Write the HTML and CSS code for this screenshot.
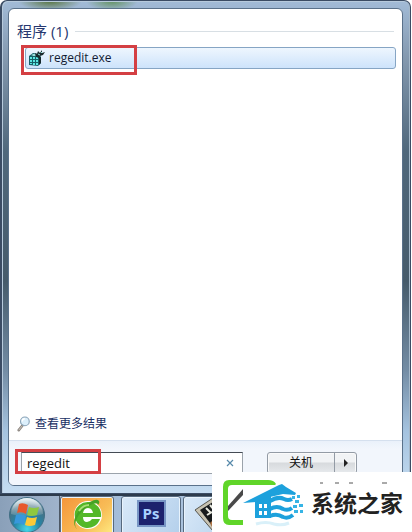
FILE: index.html
```html
<!DOCTYPE html>
<html lang="zh-CN">
<head>
<meta charset="utf-8">
<title>程序</title>
<link rel="stylesheet" href="styles.css">
</head>
<body>
<main class="menu">
  <div class="panel">
    <section class="results">
      <h1 class="group">程序 (1)</h1>
      <a class="result" href="#regedit">
        <svg class="result-icon" viewBox="0 0 18 18" aria-hidden="true">
          <path d="M1 7l4-3 6 1 2 3v6l-3 3-9-1z" fill="#176068"/>
          <path d="M2 8h2v2H2zM5 8h2v2H5zM8 8h2v2H8zM2 11h2v2H2zM5 11h2v2H5zM8 11h2v2H8zM2 14h2v1H2zM5 14h2v2H5zM8 14h2v2H8z" fill="#5ce6e2"/>
          <path d="M3 6l3-1 3 1-3 1z" fill="#b7f5f0"/>
          <path d="M11 9l2-1v6l-2 2z" fill="#12282c"/>
          <path d="M7 4l2 1 1-3 2 2 2-3v3l3-1-2 3-3 1 1 6-2 2V9L8 8z" fill="#18292c"/>
          <path d="M10 5l2 1M13 4l1-1" stroke="#8ae6df" fill="none"/>
        </svg>
        <span>regedit.exe</span>
      </a>
    </section>
    <a class="more" href="#more">
      <svg class="more-icon" viewBox="0 0 16 18" aria-hidden="true">
        <path d="M6 11l-4 5" stroke="#8c8680" stroke-width="3" stroke-linecap="round"/>
        <path d="M6 11l-4 5" stroke="#d5cec5" stroke-width="1"/>
        <circle cx="9" cy="6" r="5" fill="#dceffb" stroke="#8ba4b8" stroke-width="1.3"/>
        <path d="M6 6a3 3 0 0 1 3-3" stroke="#fff" stroke-width="1.5" fill="none"/>
      </svg>
      <span>查看更多结果</span>
    </a>
    <form class="footer">
      <div class="search">
        <input class="search-input" type="text" value="regedit" aria-label="搜索程序和文件">
        <button class="clear" type="button" aria-label="清除">
          <svg viewBox="0 0 8 8" aria-hidden="true"><path d="M1 1l6 6M7 1L1 7" stroke="#5689aa" stroke-width="1.2"/></svg>
        </button>
      </div>
      <div class="power">
        <button class="shutdown" type="button">关机</button>
        <button class="power-more" type="button" aria-label="更多选项">
          <svg viewBox="0 0 4 8" aria-hidden="true"><path d="M0 0l4 4-4 4z" fill="#222"/></svg>
        </button>
      </div>
    </form>
  </div>
  <div class="mark mark-result"></div>
  <div class="mark mark-search"></div>
</main>
<nav class="taskbar">
  <button class="start" type="button" aria-label="开始">
    <svg viewBox="0 0 38 38" aria-hidden="true">
      <defs>
        <radialGradient id="orb" cx=".5" cy=".9" r=".85"><stop offset="0" stop-color="#46d7e8"/><stop offset=".45" stop-color="#2584a5"/><stop offset=".8" stop-color="#487184"/><stop offset="1" stop-color="#a5c4ce"/></radialGradient>
        <linearGradient id="shine" x2="0" y2="1"><stop stop-color="#fff" stop-opacity=".75"/><stop offset="1" stop-color="#fff" stop-opacity=".1"/></linearGradient>
      </defs>
      <circle cx="19" cy="19" r="17.5" fill="url(#orb)" stroke="#416f85"/>
      <path d="M3 18a16 16 0 0 1 32 0c-9 3-23 3-32 0z" fill="url(#shine)"/>
      <path d="M11 8q4-2 9 1l-2 9q-4-3-9-1z" fill="#e8582c"/>
      <path d="M21 11q5 2 10 0l-2 8q-6 2-10 0z" fill="#8fc83f"/>
      <path d="M8 19q5-2 10 1l-2 9q-5-3-10-1z" fill="#3898dc"/>
      <path d="M19 21q5 2 10 0l-2 8q-6 2-10 0z" fill="#fcc938"/>
    </svg>
  </button>
  <button class="task task-browser" type="button" aria-label="浏览器">
    <svg viewBox="0 0 34 34" aria-hidden="true">
      <circle cx="18" cy="18" r="14" fill="#fff"/>
      <path fill-rule="evenodd" d="M18 5a13 13 0 1 0 12 17h-8q-2 3-5 3-4 0-4-5h18A13 13 0 0 0 18 5zm-5 11q1-5 5-5t5 5z" fill="#54b829"/>
      <path d="M7 32C0 26 7 11 20 5q7-4 9-1 1 2-1 4 0-3-5-1C12 11 6 21 5 27q0 3 2 5z" fill="#45a326"/>
      <path d="M9 14q4-6 10-6" stroke="#a8df75" stroke-width="2" fill="none"/>
    </svg>
  </button>
  <button class="task task-ps" type="button"><span class="ps">Ps</span></button>
  <button class="task task-film" type="button" aria-label="视频">
    <svg viewBox="0 0 38 34" aria-hidden="true">
      <path d="M1 13L19 1l18 16-18 17z" fill="#c8c3b2" stroke="#56544d"/>
      <path d="M6 13L19 5l13 12-13 13z" fill="#171a1c"/>
      <path d="M12 11l5 5M16 8l5 6M13 18l5-3" stroke="#e9eadf" stroke-width="2"/>
      <path d="M16 26l8-8 6 2-11 12z" fill="#b07445"/>
    </svg>
  </button>
</nav>
<aside class="brand">
  <svg class="brand-logo" viewBox="0 0 94 60" aria-hidden="true">
    <path d="M64 12q-2-4-8-4H17q-6 0-6 7v31q0 7 6 7h14v-5H20q-4 0-4-4V17q0-4 4-4h43z" fill="#60d529"/>
    <path d="M16 34l15-17v6L16 39z" fill="#494949"/>
    <path d="M31 31L67 13l3-1 4 3 10 6-1 2-12-1-13 3-11 6v2h-3v-3z" fill="#1da1dc"/>
    <path fill-rule="evenodd" d="M43 30l16-7v23H43zm4 2v4h3v-4zm5 0v4h3v-4zm-5 7v4h3v-4zm5 0v4h3v-4z" fill="#1da1dc"/>
    <path d="M58 29q8-5 14-2 4 2 8 0M58 37q7-4 13 0 5 2 9-1M58 44q7-3 13 1 5 2 10-2" stroke="#1da1dc" stroke-width="4" fill="none"/>
    <path d="M80 24h3v3h-3zM85 23h3v3h-3zM83 28h4v3h-4zM81 33h4v3h-4zM87 32h4v3h-4zM82 38h4v3h-4zM88 38h3v3h-3z" fill="#36b4e5"/>
    <path d="M44 52q10-3 18 0 8 2 15-1" stroke="#d9f0f9" stroke-width="3" fill="none"/>
  </svg>
  <span class="brand-name">系统之家</span>
  <svg class="brand-ticks" viewBox="0 0 70 2" aria-hidden="true"><path d="M2 1h3M17 1h4M31 1h4M64 1h5" stroke="#555" stroke-width="1"/></svg>
</aside>
</body>
</html>
```
FILE: styles.css
```css
* { box-sizing: border-box; }

body {
  margin: 0;
  min-height: 100vh;
  display: flex;
  flex-direction: column;
  position: relative;
  overflow: hidden;
  background: #fff;
  font: 13px/20px "Open Sans", "Noto Sans CJK SC", sans-serif;
  color: #111;
}

button { margin: 0; padding: 0; border: 0; font: inherit; }
svg { display: block; }
a { text-decoration: none; }

.menu {
  flex: 1;
  display: flex;
  position: relative;
  margin-right: 1px;
  padding: 7px 7px 7px 6px;
  border: 1px solid #3b4c64;
  border-left-width: 2px;
  border-radius: 7px 7px 0 0;
  box-shadow: inset 1px 1px #b7cadc, inset -1px 0 #a5b8c9;
  background:
    radial-gradient(ellipse 32px 10px at 48px 0, #56733d, transparent),
    radial-gradient(ellipse 26px 10px at 110px 0, #629160, transparent),
    linear-gradient(#a2bbd7 0, #8297ad 60px, #50687c 150px, #465b6b 280px, #748da5 370px, #a5c3df 430px, #c5dcf1 100%);
}

.panel {
  flex: 1;
  display: flex;
  flex-direction: column;
  min-width: 0;
  overflow: hidden;
  border: 1px solid #5a718a;
  border-radius: 6px;
  background: #fff;
}

.results {
  flex: 1;
  padding: 12px 6px 0 8px;
}

.group {
  display: flex;
  align-items: center;
  gap: 7px;
  margin: 0 2px 6px 0;
  color: #26376f;
  font-size: 15px;
  font-weight: 400;
  line-height: 20px;
}

.group::after {
  content: "";
  flex: 1;
  height: 1px;
  background: #d8dfe4;
}

.result {
  display: flex;
  align-items: center;
  gap: 3px;
  height: 22px;
  margin-left: 8px;
  padding-left: 2px;
  border: 1px solid #86a5c4;
  border-radius: 3px;
  background: linear-gradient(#eef6fe, #cde3fb);
  color: #111b32;
  font-size: 12px;
}

.result-icon { width: 18px; height: 18px; }

.more {
  display: flex;
  align-items: center;
  gap: 4px;
  padding: 0 8px;
  margin-bottom: 6px;
  color: #182e63;
  font-size: 12px;
}

.more-icon { width: 14px; height: 18px; }

.footer {
  display: flex;
  align-items: flex-start;
  gap: 24px;
  height: 45px;
  padding: 11px 12px 0;
  border-top: 1px solid #d5e0ee;
  background: linear-gradient(#eaf1fa, #f2f6fc 8px);
}

.search {
  display: flex;
  width: 222px;
  height: 22px;
  border: 1px solid #9ba3ab;
  border-top-color: #444b54;
  background: #fff;
}

.search-input {
  flex: 1;
  min-width: 0;
  padding: 0 5px;
  border: 0;
  outline: 0;
  background: transparent;
  color: #111;
  font: inherit;
}

.clear {
  display: grid;
  place-items: center;
  width: 24px;
  background: transparent;
}

.clear svg { width: 8px; height: 8px; }

.power {
  display: flex;
  width: 90px;
  height: 22px;
  border: 1px solid #939ba5;
  border-radius: 3px;
  background: linear-gradient(#f1f3f5 0 45%, #d7dadd 50%, #e7eaed);
  box-shadow: inset 0 0 0 1px #fafafa;
}

.shutdown {
  flex: 1;
  background: transparent;
  color: #111;
  font-size: 12px;
}

.power-more {
  display: grid;
  place-items: center;
  width: 22px;
  border-left: 1px solid #939ba5;
  background: transparent;
}

.power-more svg { width: 4px; height: 8px; }

.mark {
  position: absolute;
  border: 3px solid #d43f43;
  pointer-events: none;
}

.mark-result { left: 19px; top: 44px; width: 116px; height: 30px; }
.mark-search { left: 13px; bottom: 19px; width: 86px; height: 25px; }

.taskbar {
  display: flex;
  height: 38px;
  overflow: hidden;
  border-top: 2px solid #2d3b4c;
  background: linear-gradient(90deg, #8aa0b9, #a0b4cc 60px, #a4bdd9 120px, #bcd5ed);
}

.start {
  width: 60px;
  padding-left: 8px;
  border-right: 1px solid #4d5865;
  background: transparent;
}

.start svg { width: 38px; height: 38px; }

.task {
  display: grid;
  justify-content: center;
  align-content: start;
  height: 42px;
  border: 1px solid #56697e;
  border-radius: 3px;
  box-shadow: inset 0 0 0 1px #e8f3fc;
  background: linear-gradient(120deg, #d9e9f8, #b3cfeb);
}

.task-browser {
  width: 54px;
  margin-right: 7px;
  background: linear-gradient(135deg, #f4943a, #f8bd57 60%, #ffef86);
}

.task-browser svg { width: 34px; height: 34px; }

.task-ps { width: 60px; margin-right: 2px; padding-top: 3px; }

.ps {
  width: 29px;
  height: 27px;
  border: 2px solid #7795c4;
  background: #1c216d;
  color: #a9cfff;
  font: 700 15px/23px "Open Sans", sans-serif;
  text-align: center;
}

.task-film { width: 60px; }
.task-film svg { width: 38px; height: 34px; }

.brand {
  position: absolute;
  right: 0;
  bottom: 0;
  display: flex;
  align-items: center;
  gap: 5px;
  width: 200px;
  height: 60px;
  background: #fff;
}

.brand-logo { width: 94px; height: 60px; }

.brand-name {
  color: #222;
  font: 700 23px/30px "Noto Sans CJK SC", sans-serif;
  white-space: nowrap;
}

.brand-ticks {
  position: absolute;
  left: 106px;
  top: 10px;
  width: 70px;
  height: 2px;
}
```
